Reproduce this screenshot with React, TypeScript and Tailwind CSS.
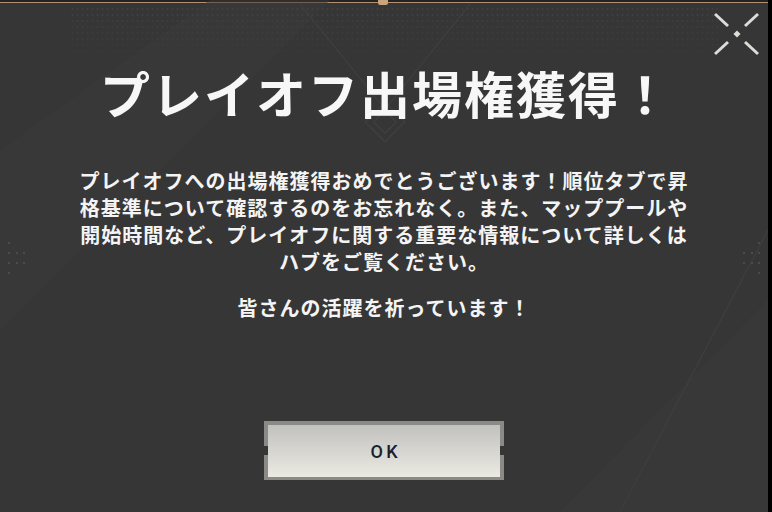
import React from "react";

const jp = "font-['Noto_Sans_CJK_JP','Noto_Sans',sans-serif]";

function CloseGlyph() {
  return (
    <svg width="54" height="52" viewBox="0 0 54 52" fill="none">
      <g stroke="#dcdcd8" strokeWidth="3" strokeLinecap="butt">
        <line x1="5" y1="6" x2="18" y2="18" />
        <line x1="48" y1="6" x2="35" y2="18" />
        <line x1="5" y1="46" x2="18" y2="34" />
        <line x1="48" y1="46" x2="35" y2="34" />
      </g>
      <rect x="24.5" y="23.5" width="5" height="5" fill="#dcdcd8" transform="rotate(45 27 26)" />
    </svg>
  );
}

function SideDots({ mirrored }: { mirrored?: boolean }) {
  const pts = mirrored
    ? [[15, 0], [0, 10], [8, 10], [15, 10], [0, 20], [8, 20], [15, 20], [15, 30]]
    : [[0, 0], [0, 10], [8, 10], [15, 10], [0, 20], [8, 20], [15, 20], [0, 30]];
  return (
    <svg width="18" height="33" viewBox="0 0 18 33">
      {pts.map(([x, y], i) => (
        <rect key={i} x={x} y={y} width="2" height="2" fill="#4b4b4b" />
      ))}
    </svg>
  );
}

function Backdrop() {
  return (
    <svg className="absolute inset-0 pointer-events-none" width="768" height="512" viewBox="0 0 768 512">
      <polygon points="0,150 210,0 330,0 0,330" fill="#3a3a3a" opacity="0.55" />
      <polygon points="560,512 768,300 768,512" fill="#393939" opacity="0.8" />
      <line x1="620" y1="512" x2="768" y2="230" stroke="#3d3d3d" strokeWidth="1.5" />
      <g stroke="#424242" strokeWidth="1" fill="none">
        <line x1="300" y1="4" x2="384" y2="108" />
        <line x1="470" y1="4" x2="386" y2="108" />
        <rect x="371" y="108" width="28" height="28" transform="rotate(45 385 122)" />
        <rect x="377" y="114" width="16" height="16" transform="rotate(45 385 122)" />
      </g>
    </svg>
  );
}

export default function App() {
  return (
    <div className="w-[772px] h-[512px] bg-black flex overflow-hidden">
      <div className="relative w-[768px] h-[512px] bg-[#363636] flex flex-col overflow-hidden">
        <Backdrop />

        {/* dotted texture along the top edge */}
        <div className="absolute left-[70px] right-[50px] top-[6px] h-[60px] bg-[radial-gradient(circle,#454545_0.9px,transparent_1.2px)] bg-[length:5px_6px] [mask-image:linear-gradient(to_bottom,black,transparent)] opacity-80" />

        {/* top rim */}
        <div className="h-[2px] bg-[#232323] shrink-0" />
        <div className="h-[1px] bg-[#b39170] shrink-0" />
        <div className="absolute left-[378px] top-0 w-[10px] h-[5px] rounded-b-[2px] bg-[#c9a57e]" />

        <div className="absolute left-[8px] top-[242px]">
          <SideDots />
        </div>
        <div className="absolute left-[743px] top-[242px]">
          <SideDots mirrored />
        </div>

        <button className="absolute left-[710px] top-[8px]" aria-label="閉じる">
          <CloseGlyph />
        </button>

        <div className="relative flex flex-col items-center">
          <h1
            className={`${jp} mt-[61px] text-[50px] leading-[56px] font-bold text-[#f7f7f7] tracking-[2px] pl-[4px]`}
          >
            プレイオフ出場権獲得！
          </h1>

          <p
            className={`${jp} mt-[47px] text-[20px] leading-[27px] font-bold text-[#f4f4f4] text-center tracking-[1px]`}
          >
            プレイオフへの出場権獲得おめでとうございます！順位タブで昇
            <br />
            格基準について確認するのをお忘れなく。また、マッププールや
            <br />
            開始時間など、プレイオフに関する重要な情報について詳しくは
            <br />
            ハブをご覧ください。
          </p>

          <p
            className={`${jp} mt-[19px] text-[20px] leading-[27px] font-bold text-[#f4f4f4] text-center tracking-[1px]`}
          >
            皆さんの活躍を祈っています！
          </p>

          <div className="relative mt-[100px] w-[240px] h-[59px] bg-[#8a8a86] p-[4px] pb-[3px]">
            <div className="absolute left-0 top-[25px] w-[4px] h-[9px] bg-[#363636]" />
            <div className="absolute right-0 top-[25px] w-[4px] h-[9px] bg-[#363636]" />
            <div className="w-full h-full bg-gradient-to-b from-[#c1c1bf] to-[#ece9e2] flex items-center justify-center">
              <span className="font-['Roboto','Liberation_Sans',sans-serif] font-medium text-[18px] tracking-[0.18em] pl-[0.18em] text-[#1b202b]">
                OK
              </span>
            </div>
          </div>
        </div>
      </div>
    </div>
  );
}
